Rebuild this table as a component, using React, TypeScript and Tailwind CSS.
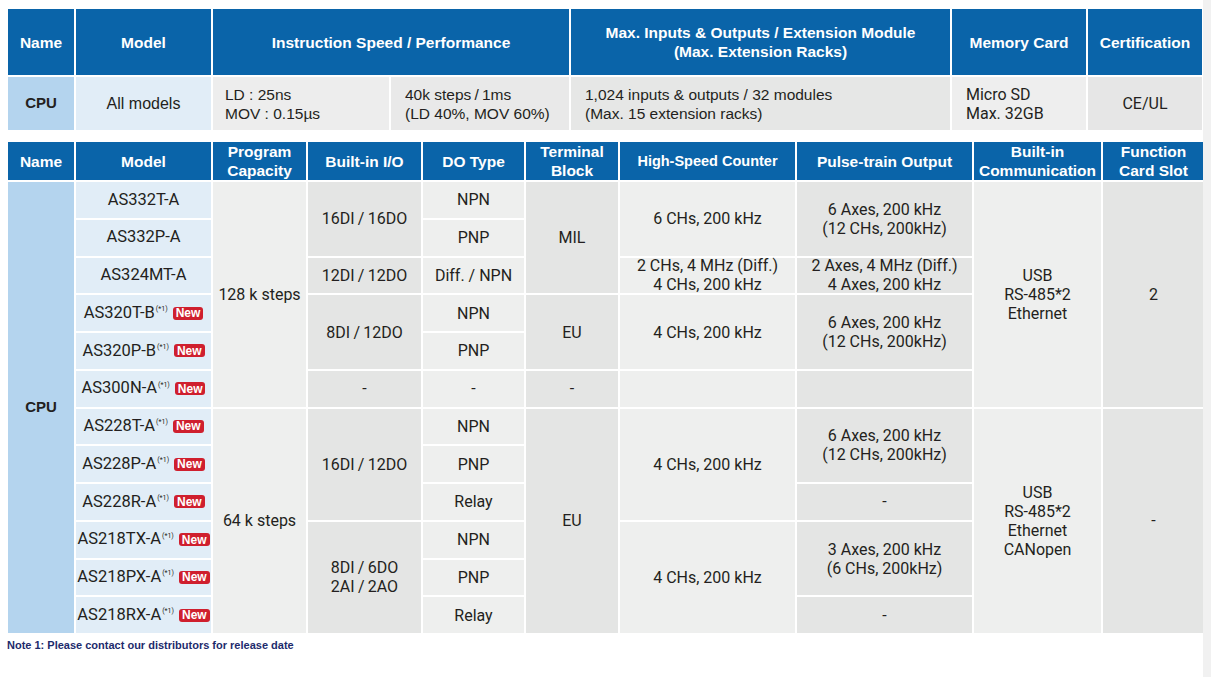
import React from 'react';

const HEAD = "bg-[#0a64a9] text-white font-bold font-['Liberation_Sans',Arial,sans-serif] text-[15.5px] leading-[19px] flex items-center justify-center text-center";
const LIGHT = 'bg-[#eeefee]';
const DARK = 'bg-[#e4e5e4]';
const MODEL = 'bg-[#e1edf7]';
const NAME = 'bg-[#b4d4ee]';

interface Cell {
  pos: string;
  bg: string;
  lines: string[];
}

const models: { name: string; note?: boolean }[] = [
  { name: 'AS332T-A' },
  { name: 'AS332P-A' },
  { name: 'AS324MT-A' },
  { name: 'AS320T-B', note: true },
  { name: 'AS320P-B', note: true },
  { name: 'AS300N-A', note: true },
  { name: 'AS228T-A', note: true },
  { name: 'AS228P-A', note: true },
  { name: 'AS228R-A', note: true },
  { name: 'AS218TX-A', note: true },
  { name: 'AS218PX-A', note: true },
  { name: 'AS218RX-A', note: true },
];

const modelRows = [
  'col-start-2 row-start-2',
  'col-start-2 row-start-3',
  'col-start-2 row-start-4',
  'col-start-2 row-start-5',
  'col-start-2 row-start-6',
  'col-start-2 row-start-7',
  'col-start-2 row-start-8',
  'col-start-2 row-start-9',
  'col-start-2 row-start-10',
  'col-start-2 row-start-11',
  'col-start-2 row-start-12',
  'col-start-2 row-start-13',
];

const doRows = [
  ['col-start-5 row-start-2', 'NPN'],
  ['col-start-5 row-start-3', 'PNP'],
  ['col-start-5 row-start-4', 'Diff. / NPN'],
  ['col-start-5 row-start-5', 'NPN'],
  ['col-start-5 row-start-6', 'PNP'],
  ['col-start-5 row-start-7', '-'],
  ['col-start-5 row-start-8', 'NPN'],
  ['col-start-5 row-start-9', 'PNP'],
  ['col-start-5 row-start-10', 'Relay'],
  ['col-start-5 row-start-11', 'NPN'],
  ['col-start-5 row-start-12', 'PNP'],
  ['col-start-5 row-start-13', 'Relay'],
];

const cells: Cell[] = [
  { pos: 'col-start-3 row-start-2 row-span-6', bg: LIGHT, lines: ['128 k steps'] },
  { pos: 'col-start-3 row-start-8 row-span-6', bg: LIGHT, lines: ['64 k steps'] },

  { pos: 'col-start-4 row-start-2 row-span-2', bg: DARK, lines: ['16DI\u2009/\u200916DO'] },
  { pos: 'col-start-4 row-start-4', bg: DARK, lines: ['12DI\u2009/\u200912DO'] },
  { pos: 'col-start-4 row-start-5 row-span-2', bg: DARK, lines: ['8DI\u2009/\u200912DO'] },
  { pos: 'col-start-4 row-start-7', bg: DARK, lines: ['-'] },
  { pos: 'col-start-4 row-start-8 row-span-3', bg: DARK, lines: ['16DI\u2009/\u200912DO'] },
  { pos: 'col-start-4 row-start-11 row-span-3', bg: DARK, lines: ['8DI\u2009/\u20096DO', '2AI\u2009/\u20092AO'] },

  ...doRows.map(([pos, t]) => ({ pos, bg: LIGHT, lines: [t] })),

  { pos: 'col-start-6 row-start-2 row-span-3', bg: DARK, lines: ['MIL'] },
  { pos: 'col-start-6 row-start-5 row-span-2', bg: DARK, lines: ['EU'] },
  { pos: 'col-start-6 row-start-7', bg: DARK, lines: ['-'] },
  { pos: 'col-start-6 row-start-8 row-span-6', bg: DARK, lines: ['EU'] },

  { pos: 'col-start-7 row-start-2 row-span-2', bg: LIGHT, lines: ['6 CHs, 200 kHz'] },
  { pos: 'col-start-7 row-start-4', bg: LIGHT, lines: ['2 CHs, 4 MHz (Diff.)', '4 CHs, 200 kHz'] },
  { pos: 'col-start-7 row-start-5 row-span-2', bg: LIGHT, lines: ['4 CHs, 200 kHz'] },
  { pos: 'col-start-7 row-start-7', bg: LIGHT, lines: [] },
  { pos: 'col-start-7 row-start-8 row-span-3', bg: LIGHT, lines: ['4 CHs, 200 kHz'] },
  { pos: 'col-start-7 row-start-11 row-span-3', bg: LIGHT, lines: ['4 CHs, 200 kHz'] },

  { pos: 'col-start-8 row-start-2 row-span-2', bg: DARK, lines: ['6 Axes, 200 kHz', '(12 CHs, 200kHz)'] },
  { pos: 'col-start-8 row-start-4', bg: DARK, lines: ['2 Axes, 4 MHz (Diff.)', '4 Axes, 200 kHz'] },
  { pos: 'col-start-8 row-start-5 row-span-2', bg: DARK, lines: ['6 Axes, 200 kHz', '(12 CHs, 200kHz)'] },
  { pos: 'col-start-8 row-start-7', bg: DARK, lines: [] },
  { pos: 'col-start-8 row-start-8 row-span-2', bg: DARK, lines: ['6 Axes, 200 kHz', '(12 CHs, 200kHz)'] },
  { pos: 'col-start-8 row-start-10', bg: DARK, lines: ['-'] },
  { pos: 'col-start-8 row-start-11 row-span-2', bg: DARK, lines: ['3 Axes, 200 kHz', '(6 CHs, 200kHz)'] },
  { pos: 'col-start-8 row-start-13', bg: DARK, lines: ['-'] },

  { pos: 'col-start-9 row-start-2 row-span-6', bg: LIGHT, lines: ['USB', 'RS-485*2', 'Ethernet'] },
  { pos: 'col-start-9 row-start-8 row-span-6', bg: LIGHT, lines: ['USB', 'RS-485*2', 'Ethernet', 'CANopen'] },

  { pos: 'col-start-10 row-start-2 row-span-6', bg: DARK, lines: ['2'] },
  { pos: 'col-start-10 row-start-8 row-span-6', bg: DARK, lines: ['-'] },
];

function NewBadge() {
  return (
    <span className="ml-[5px] inline-flex h-[13px] items-center rounded-[3px] bg-[#cf1f2e] px-[3px] font-['Liberation_Sans',Arial,sans-serif] text-[12px] font-bold leading-none text-white">
      New
    </span>
  );
}

export default function App() {
  return (
    <div className="flex h-[677px] w-[1211px] overflow-hidden bg-white text-[#231f20]">
      <div className="flex w-[1203px] flex-col pl-[8px] pt-[9px]">
        {/* top table: common specs */}
        <div className="grid w-[1194px] grid-cols-[66px_135px_176px_178px_379px_134px_114px] grid-rows-[66px_53px] gap-[2px]">
          <div className={HEAD}>Name</div>
          <div className={HEAD}>Model</div>
          <div className={`${HEAD} col-span-2`}>Instruction Speed / Performance</div>
          <div className={HEAD}>
            Max. Inputs &amp; Outputs / Extension Module
            <br />
            (Max. Extension Racks)
          </div>
          <div className={HEAD}>Memory Card</div>
          <div className={HEAD}>Certification</div>

          <div className={`${NAME} flex items-center justify-center font-['Liberation_Sans',Arial,sans-serif] text-[15px] font-bold`}>
            CPU
          </div>
          <div className={`${MODEL} flex items-center justify-center font-['Liberation_Sans',Arial,sans-serif] text-[16px]`}>
            All models
          </div>
          <div className="flex flex-col justify-center bg-[#ededed] pl-[12px] font-['Liberation_Sans',Arial,sans-serif] text-[15.5px] leading-[19px]">
            <span>LD : 25ns</span>
            <span>MOV : 0.15µs</span>
          </div>
          <div className="flex flex-col justify-center bg-[#e9e9e9] pl-[14px] font-['Liberation_Sans',Arial,sans-serif] text-[15.5px] leading-[19px]">
            <span>40k steps{'\u2009'}/{'\u2009'}1ms</span>
            <span>(LD 40%, MOV 60%)</span>
          </div>
          <div className="flex flex-col justify-center bg-[#e6e7e6] pl-[14px] font-['Liberation_Sans',Arial,sans-serif] text-[15.5px] leading-[19px]">
            <span>1,024 inputs &amp; outputs / 32 modules</span>
            <span>(Max. 15 extension racks)</span>
          </div>
          <div className="flex flex-col justify-center bg-[#eeeeee] pl-[14px] font-['Roboto',sans-serif] text-[16px] leading-[19px]">
            <span>Micro SD</span>
            <span>Max. 32GB</span>
          </div>
          <div className="flex items-center justify-center bg-[#e6e6e6] font-['Roboto',sans-serif] text-[16px]">
            CE/UL
          </div>
        </div>

        {/* model table */}
        <div className="mt-[12px] grid h-[491px] w-[1196px] grid-cols-[66px_135px_93px_113px_101px_92px_175px_175px_127px_101px] grid-rows-[38px_repeat(12,minmax(0,1fr))] gap-[2px]">
          <div className={`${HEAD} col-start-1 row-start-1`}>Name</div>
          <div className={`${HEAD} col-start-2 row-start-1`}>Model</div>
          <div className={`${HEAD} col-start-3 row-start-1`}>
            Program
            <br />
            Capacity
          </div>
          <div className={`${HEAD} col-start-4 row-start-1`}>Built-in I/O</div>
          <div className={`${HEAD} col-start-5 row-start-1`}>DO Type</div>
          <div className={`${HEAD} col-start-6 row-start-1`}>
            Terminal
            <br />
            Block
          </div>
          <div className={`${HEAD} col-start-7 row-start-1 !text-[14.5px]`}>High-Speed Counter</div>
          <div className={`${HEAD} col-start-8 row-start-1`}>Pulse-train Output</div>
          <div className={`${HEAD} col-start-9 row-start-1`}>
            Built-in
            <br />
            Communication
          </div>
          <div className={`${HEAD} col-start-10 row-start-1`}>
            Function
            <br />
            Card Slot
          </div>

          <div className={`${NAME} col-start-1 row-start-2 row-span-12 flex items-center justify-center font-['Liberation_Sans',Arial,sans-serif] text-[15px] font-bold`}>
            CPU
          </div>

          {models.map((m, i) => (
            <div
              key={m.name}
              className={`${MODEL} ${modelRows[i]} flex items-center justify-center whitespace-nowrap font-['Roboto',sans-serif] text-[16.5px] leading-none`}
            >
              <span>{m.name}</span>
              {m.note && (
                <>
                  <sup className="ml-[1px] text-[7px] leading-none">(*1)</sup>
                  <NewBadge />
                </>
              )}
            </div>
          ))}

          {cells.map((c, i) => (
            <div
              key={i}
              className={`${c.bg} ${c.pos} flex flex-col items-center justify-center text-center font-['Roboto',sans-serif] text-[16px] leading-[19px]`}
            >
              {c.lines.map((l, j) => (
                <span key={j} className="whitespace-nowrap">
                  {l}
                </span>
              ))}
            </div>
          ))}
        </div>

        <p className="-ml-[1px] mt-[4px] font-['Liberation_Sans',Arial,sans-serif] text-[11px] font-bold text-[#1d2b6c]">
          Note 1: Please contact our distributors for release date
        </p>
      </div>
      <div className="h-full w-[8px] bg-[#f1f1f1]" />
    </div>
  );
}
